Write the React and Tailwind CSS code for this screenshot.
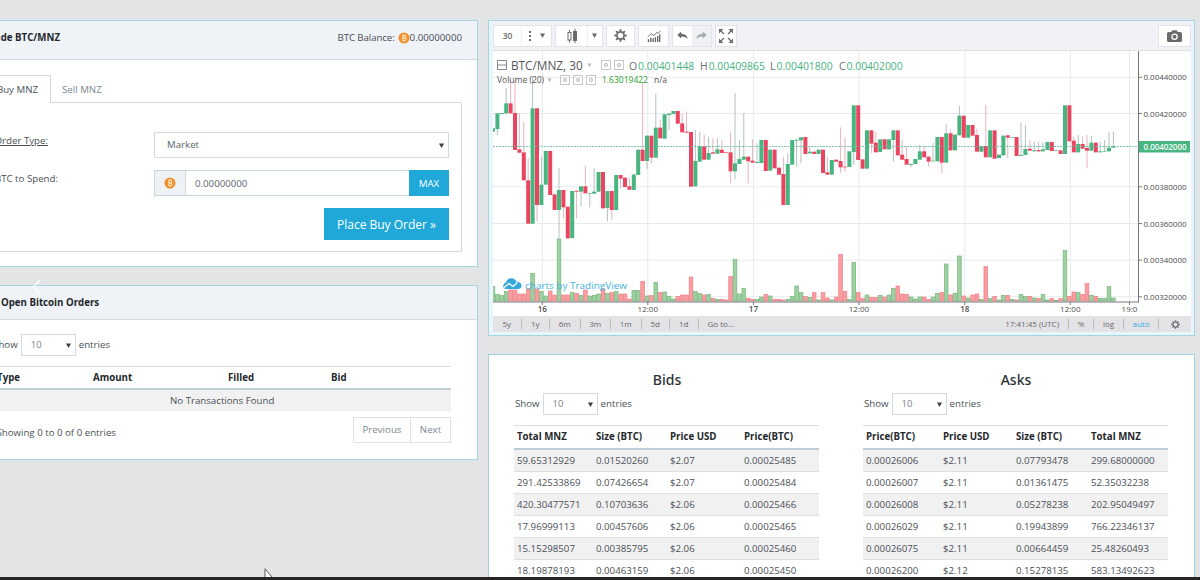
import React from 'react';
import clsx from 'clsx';

// [direction, body top, body bottom, high, low, volume top], one unit is a third of a pixel
const CANDLES = [
  ['g', 115, 125, 115, 125, 590], ['g', 70, 117, 70, 135, 614], ['g', 69, 72, 69, 72, 617], ['g', 40, 70, -5, 70, 604],
  ['r', 40, 70, -30, 70, 600], ['r', 69, 180, -30, 180, 600], ['r', 178, 188, 70, 190, 612], ['r', 187, 271, 95, 271, 612],
  ['r', 271, 401, 205, 401, 597], ['g', 55, 401, -40, 401, 550], ['r', 55, 345, 55, 395, 597], ['g', 284, 345, 200, 345, 605],
  ['g', 183, 284, 183, 284, 618], ['r', 183, 315, 183, 315, 603], ['r', 313, 360, 313, 360, 615], ['g', 300, 360, 235, 450, 447],
  ['r', 300, 352, 300, 385, 615], ['r', 350, 445, 350, 445, 615], ['g', 303, 444, 303, 444, 608], ['r', 302, 305, 302, 385, 610],
  ['g', 289, 305, 289, 350, 617], ['r', 289, 310, 228, 310, 600], ['g', 309, 311, 309, 352, 618], ['g', 305, 311, 235, 311, 616],
  ['g', 246, 305, 246, 305, 612], ['r', 246, 355, 246, 355, 597], ['g', 303, 354, 303, 395, 611], ['r', 303, 360, 303, 390, 608],
  ['g', 255, 360, 255, 360, 605], ['r', 255, 266, 255, 295, 612], ['r', 263, 291, 263, 291, 612], ['r', 289, 299, 262, 299, 627],
  ['g', 254, 300, 250, 300, 602], ['g', 179, 255, 179, 255, 601], ['r', 179, 213, -25, 213, 574], ['g', 137, 213, 137, 238, 618],
  ['r', 137, 203, 137, 220, 617], ['g', 113, 203, 12, 203, 577], ['r', 113, 145, 90, 145, 608], ['g', 73, 146, 73, 146, 606],
  ['g', 71, 75, 71, 120, 619], ['g', 63, 72, 63, 72, 627], ['r', 63, 101, 63, 101, 619], ['r', 100, 127, 70, 127, 615],
  ['r', 125, 128, 65, 128, 615], ['r', 126, 290, 126, 290, 561], ['g', 213, 289, 120, 289, 605], ['g', 169, 215, 125, 215, 611],
  ['r', 169, 209, 135, 209, 615], ['g', 189, 209, 140, 209, 614], ['r', 187, 191, 145, 191, 625], ['g', 178, 191, 145, 191, 628],
  ['r', 179, 189, 150, 189, 628], ['r', 187, 189, 187, 189, 630], ['r', 187, 244, 125, 280, 560], ['g', 220, 244, 8, 268, 509],
  ['g', 207, 222, 150, 222, 612], ['g', 200, 209, 70, 209, 595], ['r', 200, 214, 200, 280, 625], ['r', 212, 218, 148, 218, 628],
  ['g', 216, 219, 160, 219, 629], ['g', 150, 219, 150, 219, 621], ['r', 150, 243, 150, 243, 614], ['g', 179, 242, 179, 242, 618],
  ['r', 179, 235, 179, 235, 628], ['r', 233, 254, 233, 254, 628], ['r', 252, 345, 200, 345, 630], ['g', 222, 345, 190, 345, 628],
  ['g', 150, 224, 150, 224, 619], ['g', 149, 152, 149, 230, 588], ['g', 142, 151, 142, 220, 608], ['r', 141, 192, 141, 192, 620],
  ['g', 185, 190, 170, 190, 622], ['r', 185, 192, 185, 192, 608], ['g', 179, 192, 179, 192, 630], ['r', 179, 249, 179, 249, 608],
  ['r', 247, 254, 200, 254, 624], ['g', 210, 254, 210, 254, 630], ['r', 209, 215, 209, 215, 621], ['r', 213, 232, 112, 250, 493],
  ['r', 230, 232, 142, 245, 605], ['g', 184, 231, 184, 231, 628], ['g', 46, 186, 46, 225, 517], ['r', 46, 210, 46, 210, 608],
  ['r', 208, 236, 208, 236, 626], ['g', 121, 236, 121, 236, 615], ['r', 121, 161, 121, 190, 622], ['r', 158, 187, 125, 187, 622],
  ['g', 148, 186, 148, 186, 617], ['r', 148, 178, 148, 178, 621], ['g', 148, 178, 148, 178, 615], ['g', 121, 150, 121, 215, 595],
  ['r', 121, 196, 121, 196, 588], ['r', 194, 209, 150, 209, 612], ['r', 207, 224, 170, 224, 613], ['g', 222, 225, 222, 232, 621],
  ['g', 207, 222, 207, 222, 627], ['g', 184, 209, 165, 209, 621], ['r', 184, 202, 168, 202, 621], ['r', 200, 215, 200, 230, 628],
  ['g', 212, 214, 160, 214, 621], ['g', 141, 214, 141, 214, 610], ['r', 141, 218, 141, 250, 608], ['g', 130, 218, 103, 218, 522],
  ['r', 130, 181, 118, 181, 615], ['g', 134, 181, 134, 181, 610], ['g', 77, 136, 47, 136, 498], ['r', 77, 143, 77, 143, 618],
  ['g', 105, 143, 105, 143, 624], ['r', 105, 137, 105, 137, 615], ['r', 135, 185, 115, 185, 612], ['g', 169, 185, 169, 185, 628],
  ['r', 168, 202, 45, 202, 530], ['g', 121, 202, 121, 202, 626], ['r', 121, 206, 121, 206, 619], ['g', 194, 204, 194, 204, 630],
  ['g', 137, 196, 137, 196, 616], ['r', 136, 143, 136, 205, 616], ['g', 141, 143, 141, 143, 628], ['r', 141, 198, 141, 198, 630],
  ['g', 195, 198, 98, 198, 613], ['g', 177, 195, 105, 195, 620], ['r', 176, 182, 150, 182, 619], ['g', 181, 184, 155, 184, 624],
  ['r', 180, 184, 155, 184, 625], ['g', 178, 184, 158, 184, 613], ['g', 156, 180, 156, 180, 630], ['r', 156, 183, 156, 183, 626],
  ['g', 180, 182, 180, 182, 631], ['r', 181, 192, 181, 192, 626], ['g', 46, 192, 46, 192, 482], ['r', 46, 154, 46, 154, 619],
  ['r', 152, 187, 140, 187, 606], ['g', 162, 187, 135, 187, 608], ['r', 162, 176, 140, 176, 613], ['r', 174, 182, 135, 235, 581],
  ['g', 158, 182, 138, 182, 616], ['r', 158, 187, 158, 187, 619], ['g', 184, 187, 155, 187, 625], ['g', 183, 185, 150, 185, 625],
  ['g', 173, 184, 125, 184, 590], ['g', 168, 173, 125, 173, 624],
];

const PRICES = [
  ['0.00440000', 26.3], ['0.00420000', 62.5], ['0.00380000', 135.8],
  ['0.00360000', 172.5], ['0.00340000', 209.2], ['0.00320000', 245.8],
];

const TIMES = [
  ['16', 49.3, true], ['12:00', 154.8], ['17', 260.4, true], ['12:00', 366], ['18', 471.8, true], ['12:00', 577.3], ['19:0', 636.5],
];

const BIDS = [
  ['59.65312929', '0.01520260', '$2.07', '0.00025485'],
  ['291.42533869', '0.07426654', '$2.07', '0.00025484'],
  ['420.30477571', '0.10703636', '$2.06', '0.00025466'],
  ['17.96999113', '0.00457606', '$2.06', '0.00025465'],
  ['15.15298507', '0.00385795', '$2.06', '0.00025460'],
  ['18.19878193', '0.00463159', '$2.06', '0.00025450'],
];

const ASKS = [
  ['0.00026006', '$2.11', '0.07793478', '299.68000000'],
  ['0.00026007', '$2.11', '0.01361475', '52.35032238'],
  ['0.00026008', '$2.11', '0.05278238', '202.95049497'],
  ['0.00026029', '$2.11', '0.19943899', '766.22346137'],
  ['0.00026075', '$2.11', '0.00664459', '25.48260493'],
  ['0.00026200', '$2.12', '0.15278135', '583.13492623'],
];

const Bitcoin = () => (
  <svg width="12" height="12" viewBox="0 0 12 12" className="shrink-0">
    <circle cx="6" cy="6" r="5.5" fill="#f0922b" />
    <path
      d="M4.6 3.4h1.9a1.2 1.2 0 0 1 0 2.5H4.9h1.8a1.35 1.35 0 0 1 0 2.7H4.6M5 3.4v5.2M5.6 2.4v1M5.6 8.6v1M7 2.6v.9M7 8.5v.9"
      fill="none"
      stroke="#fff3e0"
      strokeWidth="0.9"
    />
  </svg>
);

const Caret = ({ className }) => (
  <svg width="5" height="5" viewBox="0 0 5 5" className={clsx('shrink-0', className)}>
    <path d="M0 .5h5L2.5 5z" fill="currentColor" />
  </svg>
);

const EntriesSelect = () => (
  <div className="flex items-center gap-[3px]">
    <span>Show</span>
    <div className="flex h-[22px] w-[55px] items-center justify-between border border-[#d3dbe1] bg-white pr-1 pl-[9px] text-[9.5px] text-[#7c8389]">
      10
      <Caret className="text-[#3c4146]" />
    </div>
    <span>entries</span>
  </div>
);

const Gear = ({ size }) => (
  <svg width={size} height={size} viewBox="0 0 14 14" fill="none" stroke="currentColor">
    <circle cx="7" cy="7" r="3.9" strokeWidth="1.8" />
    <g strokeWidth="2">
      <path d="M7 .4v2.2M7 11.4v2.2M.4 7h2.2M11.4 7h2.2M2.3 2.3l1.6 1.6M10.1 10.1l1.6 1.6M2.3 11.7l1.6-1.6M10.1 3.9l1.6-1.6" />
    </g>
  </svg>
);

const ToolGroup = ({ className, children }) => (
  <div className={clsx('flex h-[22px] items-center border border-[#e3e4e9] bg-white text-[#6b6b6d]', className)}>{children}</div>
);

const ChartToolbar = () => (
  <div className="flex h-[29px] items-center bg-[#f0f2f7]">
    <ToolGroup className="w-[59px] text-[8.5px]">
      <span className="w-[27px] text-center font-semibold">30</span>
      <span className="flex h-full w-[17px] flex-col items-center justify-center gap-[2px] border-l border-[#efeff2]">
        <i className="h-[2px] w-[2px] bg-current" />
        <i className="h-[2px] w-[2px] bg-current" />
        <i className="h-[2px] w-[2px] bg-current" />
      </span>
      <span className="flex flex-1 justify-center pr-1"><Caret /></span>
    </ToolGroup>
    <ToolGroup className="ml-[3px] w-[48px]">
      <span className="flex h-full w-[32px] items-center justify-center border-r border-[#efeff2]">
        <svg width="12" height="14" viewBox="0 0 12 14" fill="none" stroke="currentColor">
          <path d="M3.5 1v2.5M3.5 11v2.5M9 0v14" />
          <rect x="2" y="3.5" width="3" height="7.5" />
          <rect x="7.5" y="2.5" width="3" height="9" fill="currentColor" />
        </svg>
      </span>
      <span className="flex flex-1 justify-center pr-[2px]"><Caret /></span>
    </ToolGroup>
    <ToolGroup className="ml-[3px] w-[29px] justify-center"><Gear size={13} /></ToolGroup>
    <ToolGroup className="ml-[3px] w-[31px] justify-center">
      <svg width="14" height="12" viewBox="0 0 15 13" fill="none" stroke="currentColor">
        <path d="M1.5 13v-3M4 13V8.500M6.500 13V9M9 13V7.500M11.500 13V6.500M13.700 13V4.500" strokeWidth="1.500" />
        <path d="M.5 7.500 4.500 4l3 2.200 3-3.700 1.500 1.300L14.500.8" />
      </svg>
    </ToolGroup>
    <ToolGroup className="ml-[3px] w-[40px]">
      <span className="flex flex-1 justify-center">
        <svg width="11" height="9" viewBox="0 0 11 9"><path d="M4.200.5v2.200C8 2.800 10.200 4.500 10.700 8 9 6 7.200 5.400 4.200 5.400v2.200L.3 4z" fill="currentColor" /></svg>
      </span>
      <span className="flex h-full flex-1 items-center justify-center bg-[#f0f1f5] text-[#a9aaae]">
        <svg width="11" height="9" viewBox="0 0 11 9"><path d="M6.800.5v2.200C3 2.800.8 4.500.3 8 2 6 3.800 5.400 6.800 5.400v2.200L10.700 4z" fill="currentColor" /></svg>
      </span>
    </ToolGroup>
    <ToolGroup className="ml-[3px] w-[22px] justify-center">
      <svg width="14" height="14" viewBox="0 0 14 14" fill="currentColor" stroke="currentColor" className="shrink-0">
        <path d="m2 2 3 3M12 2 9 5M2 12l3-3M12 12 9 9" strokeWidth="1.300" />
        <path d="M0 0h4.500L0 4.500zM14 0v4.500L9.500 0zM0 14V9.500L4.500 14zM14 14H9.500L14 9.500z" stroke="none" />
      </svg>
    </ToolGroup>
    <ToolGroup className="ml-auto w-[33px] justify-center">
      <svg width="15" height="12" viewBox="0 0 15 12">
        <path d="M1.500 2h2.700L5.300.3h4.400L10.800 2h2.700Q15 2 15 3.500v7q0 1.500-1.500 1.500h-12Q0 12 0 10.500v-7Q0 2 1.500 2z" fill="currentColor" />
        <circle cx="7.500" cy="6.800" r="2.600" fill="none" stroke="#fff" strokeWidth="1.300" />
      </svg>
    </ToolGroup>
  </div>
);

const SmallBoxes = ({ count }) => (
  <span className="flex gap-[3px]">
    {Array.from({ length: count }, (_, i) => (
      <span key={i} className="flex h-[10px] w-[10px] items-center justify-center border-[1.5px] border-[#c8c8ca]">
        <i className="h-1 w-1 rounded-full border border-[#b4b4b6]" />
      </span>
    ))}
  </span>
);

const Quote = ({ label, value, className }) => (
  <span className={clsx('absolute top-[2px] whitespace-nowrap', className)}>
    <span className="mr-px text-[#6c6c6e]">{label}</span>
    <span className="text-[#47b27d]">{value}</span>
  </span>
);

const Legend = () => (
  <div className="absolute top-[6px] left-[4px] w-[420px] text-[#565659]">
    <div className="relative flex h-4 items-center text-[10.4px]">
      <svg width="10" height="10" viewBox="0 0 10 10" fill="none" stroke="#8a8a8d">
        <path d="M.5.5h9v9h-9zM0 5h10" />
      </svg>
      <span className="ml-1 w-[76px] text-[11.8px] font-medium whitespace-nowrap">BTC/MNZ, 30</span>
      <Caret className="mr-[9px] h-[4px] text-[#b4b4b6]" />
      <SmallBoxes count={2} />
      <Quote label="O" value="0.00401448" className="left-[132px]" />
      <Quote label="H" value="0.00409865" className="left-[203px]" />
      <Quote label="L" value="0.00401800" className="left-[273px]" />
      <Quote label="C" value="0.00402000" className="left-[342px]" />
    </div>
    <div className="flex h-[14px] items-center text-[8.5px]">
      <span className="w-[50px] whitespace-nowrap">Volume (20)</span>
      <Caret className="mr-[8px] h-[4px] text-[#b4b4b6]" />
      <SmallBoxes count={3} />
      <span className="ml-[6px] w-[52px] text-[#2c9c2c]">1.63019422</span>
      <span>n/a</span>
    </div>
  </div>
);

const PriceChart = () => (
  <div className="relative h-[265px] bg-white">
    <svg width="698" height="265" viewBox="0 0 698 265" className="block">
      <g stroke="#e6eaec">
        {PRICES.map(([label, y]) => <path key={label} d={`M0 ${y}H645`} />)}
        {TIMES.map(([label, x]) => <path key={x} d={`M${x} 0V251`} />)}
      </g>
      <g transform="translate(-3 39) scale(0.33333)">
        {CANDLES.map(([dir, top, bottom, high, low, vol], i) => {
          const x = 9 + i * 13.2;
          const up = dir === 'g';
          return (
            <g key={i}>
              <rect
                x={x - 5.5}
                y={vol}
                width="11"
                height={633 - vol}
                fill={up ? '#9ed0a2' : '#fb9da0'}
                stroke={up ? '#71b478' : '#ea7f86'}
                strokeWidth="2"
              />
              <path d={`M${x} ${high}V${low}`} stroke={up ? '#a3b5b0' : '#e2a5b1'} strokeWidth="2.5" />
              <rect x={x - 6} y={top} width="12" height={bottom - top} fill={up ? '#47b57f' : '#ea4560'} />
            </g>
          );
        })}
      </g>
      <path d="M0 95.500H645" stroke="#63b99b" strokeDasharray="2 1" strokeWidth="0.800" />
      <path d="M645.500 0V251.500M0 251H645" stroke="#77777b" />
      <g fontSize="8" fill="#4c4c50">
        {PRICES.map(([label, y]) => (
          <g key={label}>
            <path d={`M645 ${y}h4`} stroke="#77777b" />
            <text x="650.500" y={y + 3} textLength="43">{label}</text>
          </g>
        ))}
        {TIMES.map(([label, x, strong]) => (
          <g key={x} textAnchor="middle">
            <path d={`M${x} 251v3`} stroke="#77777b" />
            <text x={x} y="261" fontWeight={strong ? 600 : 400}>{label}</text>
          </g>
        ))}
      </g>
      <rect x="646" y="90" width="51" height="11.500" fill="#47b57f" />
      <text x="650.500" y="98.800" fontSize="8" fontWeight="600" fill="#fff" textLength="43">0.00402000</text>
      <g transform="translate(11 228)">
        <path d="M1 10a3.500 3.500 0 0 1 1-6.500A5.500 5.500 0 0 1 12.500 3 3.700 3.700 0 0 1 15 10z" fill="#36a7d9" />
        <path d="m0 8.500 5-4 4 3 4.500-4" fill="none" stroke="#fff" strokeWidth="1.300" />
      </g>
      <text x="32" y="238" fontSize="9.500" fill="#45b2de" textLength="102" lengthAdjust="spacingAndGlyphs">charts by TradingView</text>
    </svg>
    <Legend />
  </div>
);

const RangeBar = () => (
  <div className="flex h-[16px] items-center bg-[#e3e3e6] text-[8px] text-[#68686d]">
    {['5y', '1y', '6m', '3m', '1m', '5d', '1d'].map((range) => (
      <span
        key={range}
        className={clsx(
          'flex h-[10px] items-center justify-center border-r border-[#b9b9be] pb-px',
          ['6m', '3m', '1m'].includes(range) ? 'w-[30.500px]' : 'w-[28.500px]'
        )}
      >
        {range}
      </span>
    ))}
    <span className="ml-[9px] pb-px">Go to...</span>
    <span className="ml-auto pr-[9px] pb-px">17:41:45 (UTC)</span>
    <span className="flex h-[10px] w-[25px] items-center justify-center border-l border-[#b9b9be]">%</span>
    <span className="flex h-[10px] w-[30px] items-center justify-center border-l border-[#b9b9be]">log</span>
    <span className="flex h-[10px] w-[36px] items-center justify-center border-x border-[#b9b9be] text-[#36aede]">auto</span>
    <span className="flex w-[32px] justify-center"><Gear size={9} /></span>
  </div>
);

const OrderBook = ({ title, headers, rows, columns }) => (
  <div className="w-[305px]">
    <h4 className="pl-px text-center font-['Noto_Sans',sans-serif] text-[14px] leading-[20px] font-medium text-[#2b3035]">{title}</h4>
    <div className="mt-[3px] mb-[10px] pl-px"><EntriesSelect /></div>
    <div className={clsx('grid h-[25px] items-center border-t border-b-2 border-t-[#d5dde2] border-b-[#bccdd3] font-bold text-[#24282c]', columns)}>
      {headers.map((header) => <span key={header}>{header}</span>)}
    </div>
    {rows.map((row, i) => (
      <div
        key={row[0]}
        className={clsx('grid h-[22px] items-center border-b border-[#d9dfe3] pt-px', columns, i % 2 === 0 ? 'bg-[#f1f1f2]' : 'bg-white')}
      >
        {row.map((cell, j) => <span key={j}>{cell}</span>)}
      </div>
    ))}
  </div>
);

const TradeCard = () => (
  <section className="h-[247px] border border-l-0 border-[#a4d5e0] bg-white">
    <header className="flex h-[39px] items-center justify-between border-b border-[#d3dbe1] bg-[#eff2f6] pr-[15px] pb-[5px]">
      <div className="flex w-[60px] justify-end font-bold whitespace-nowrap text-[#24282c]">Trade BTC/MNZ</div>
      <div className="flex items-center">
        <span className="mr-[3px] tracking-[-0.1px]">BTC Balance:</span>
        <Bitcoin />
        <span>0.00000000</span>
      </div>
    </header>
    <nav className="mt-[15px] flex h-[27px]">
      <div className="relative z-10 flex h-[28px] w-[51px] items-center justify-end border-t border-r border-[#d3dbe1] bg-white pr-[12px] whitespace-nowrap">
        Buy MNZ
      </div>
      <div className="flex items-center pt-[2px] pl-[11px] text-[#7b878f]">Sell MNZ</div>
    </nav>
    <div className="mr-[15px] h-[150px] border border-l-0 border-[#d3dbe1] pt-[29px] pr-[12px]">
      <div className="flex h-[38px] justify-between">
        <div className="flex h-[18px] w-[48px] items-center justify-end whitespace-nowrap underline">Order Type:</div>
        <div className="flex h-[26px] w-[295px] items-center justify-between border border-[#d3dbe1] pr-1 pl-[12px] text-[#5b656d]">
          Market
          <Caret className="text-[#3c4146]" />
        </div>
      </div>
      <div className="flex h-[38px] justify-between">
        <div className="flex h-[18px] w-[58px] items-center justify-end whitespace-nowrap">BTC to Spend:</div>
        <div className="flex h-[26px] w-[295px] border border-[#c6d6de]">
          <div className="flex w-[31px] items-center justify-center border-r border-[#d3dbe1] bg-[#eff2f4]"><Bitcoin /></div>
          <div className="flex flex-1 items-center pt-px pl-[9px] text-[#5b656d]">0.00000000</div>
          <div className="-my-px -mr-px flex w-[40px] items-center justify-center bg-[#20a8d8] pt-px font-medium text-white">MAX</div>
        </div>
      </div>
      <div className="flex justify-end">
        <div className="flex h-[32px] w-[125px] items-center justify-center bg-[#20a8d8] pt-px text-[12px] whitespace-nowrap text-white">
          Place Buy Order »
        </div>
      </div>
    </div>
  </section>
);

const OpenOrdersCard = () => (
  <section className="relative mt-[18px] h-[175px] border border-l-0 border-[#a4d5e0] bg-white">
    <header className="flex h-[34px] items-center border-b border-[#d3dbe1] bg-[#eff2f6] pt-px pl-px font-bold text-[#24282c]">
      Open Bitcoin Orders
    </header>
    <div className="mt-[14px] flex w-[110px] justify-end"><EntriesSelect /></div>
    <div className="mt-[10px] mr-[26px]">
      <div className="flex h-[24px] items-center border-t border-b-2 border-t-[#d5dde2] border-b-[#bccdd3] font-bold text-[#24282c]">
        <span className="flex w-[20px] justify-end">Type</span>
        <span className="ml-[73px] w-[135px]">Amount</span>
        <span className="w-[103px]">Filled</span>
        <span>Bid</span>
      </div>
      <div className="flex h-[21px] items-center bg-[#f1f1f2] pt-px pl-[170px]">No Transactions Found</div>
      <div className="mt-[6px] flex items-start justify-between">
        <span className="mt-[9px] flex w-[116px] justify-end whitespace-nowrap">Showing 0 to 0 of 0 entries</span>
        <div className="flex h-[26px] border border-[#dde2e7] pt-px text-[#7b878f]">
          <span className="-mt-px flex w-[57px] items-center justify-center border-r border-[#dde2e7]">Previous</span>
          <span className="-mt-px flex w-[39px] items-center justify-center">Next</span>
        </div>
      </div>
    </div>
    <svg width="10" height="18" viewBox="0 0 10 18" className="absolute -top-[8px] left-[32px]">
      <path d="M8.500 1.500 1.500 9l7 7.500" fill="none" stroke="#fff" strokeOpacity="0.75" strokeWidth="1.800" />
    </svg>
  </section>
);

export default function App() {
  return (
    <div className="relative flex h-[580px] w-[1200px] overflow-hidden bg-[#e3e4e6] font-['Open_Sans',sans-serif] text-[9.7px] leading-[14px] text-[#4a5056]">
      <div className="w-[478px] pt-[20px]">
        <TradeCard />
        <OpenOrdersCard />
      </div>
      <div className="ml-[10px] w-[707px] pt-[20px]">
        <section className="h-[316px] border border-[#a4d5e0] bg-[#e9f5fa] pr-[3px] pl-[4px]">
          <ChartToolbar />
          <div className="h-px bg-[#dfe1e5]" />
          <PriceChart />
          <RangeBar />
        </section>
        <section className="mt-[18px] flex h-[240px] justify-between border border-[#a4cfe0] bg-white pt-[15px] pr-[26px] pl-[25px]">
          <OrderBook
            title="Bids"
            headers={['Total MNZ', 'Size (BTC)', 'Price USD', 'Price(BTC)']}
            rows={BIDS}
            columns="grid-cols-[79px_74px_74px_75px] pl-[3px]"
          />
          <OrderBook
            title="Asks"
            headers={['Price(BTC)', 'Price USD', 'Size (BTC)', 'Total MNZ']}
            rows={ASKS}
            columns="grid-cols-[77px_73px_75px_77px] pl-[3px]"
          />
        </section>
      </div>
      <svg width="12" height="16" viewBox="0 0 12 16" className="absolute top-[568px] left-[264px]">
        <path d="M1 .8v13l3.500-3h5z" fill="#fff" stroke="#55585c" />
      </svg>
      <div className="absolute bottom-0 left-0 h-[3px] w-full bg-[#262427]" />
    </div>
  );
}
